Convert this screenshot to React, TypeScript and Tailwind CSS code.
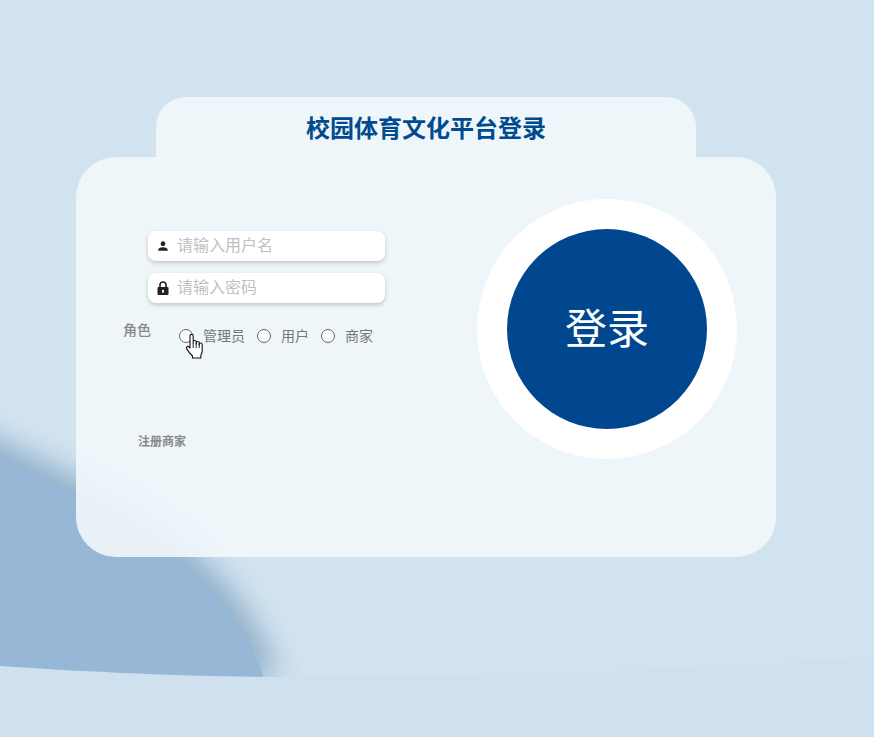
import React from "react";
import { MdPerson } from "react-icons/md";

const font = "[font-family:'Noto_Sans_CJK_SC','Liberation_Sans',sans-serif]";

function Background() {
  const blob = "M-40 438 C 40 478 120 512 170 552 C 215 590 250 630 268 690 L -40 690 Z";
  return (
    <svg className="absolute inset-0 w-full h-full" viewBox="0 0 874 737" aria-hidden="true">
      <defs>
        <filter id="soft" x="-30%" y="-30%" width="160%" height="160%">
          <feGaussianBlur stdDeviation="15" />
        </filter>
      </defs>
      <rect width="874" height="737" fill="#d2e3f0" />
      <path d={blob} fill="#86a8c4" filter="url(#soft)" opacity="0.9" transform="translate(10 -12)" />
      <path d={blob} fill="#96b8d6" />
      <path d="M0 666 C 120 674 210 677 300 677 C 500 677 700 668 874 657 L874 737 L0 737 Z" fill="#cfe0ef" />
    </svg>
  );
}

function Radio({ label }: { label: string }) {
  return (
    <label className="flex items-center">
      <input type="radio" name="role" className="appearance-none w-[14px] h-[14px] rounded-full border border-[#666] bg-white/70" />
      <span className="ml-[10px] -mt-[1px] text-[14px] leading-[20px] text-[#777]">{label}</span>
    </label>
  );
}

function LockIcon() {
  return (
    <svg className="ml-[9px] w-[12px] h-[15px] text-[#222]" viewBox="0 0 12 15" aria-hidden="true">
      <path d="M3 6.5V4a3 3 0 0 1 6 0v2.5" fill="none" stroke="currentColor" strokeWidth="1.6" />
      <path fillRule="evenodd" d="M1.5 6H10.5A1 1 0 0 1 11.5 7V13A1 1 0 0 1 10.5 14H1.5A1 1 0 0 1 .5 13V7A1 1 0 0 1 1.5 6ZM6 8.7a1.2 1.2 0 0 0-.6 2.2V12h1.2v-1.1A1.2 1.2 0 0 0 6 8.7Z" fill="currentColor" />
    </svg>
  );
}

function Hand() {
  return (
    <svg className="absolute left-[109px] top-[176px] w-[19px] h-[26px]" viewBox="0 0 19 26" aria-hidden="true">
      <path
        d="M5 15 V3 a1.6 1.6 0 0 1 3.2 0 V10 V9 a1.5 1.5 0 0 1 3 0 V11 V10 a1.5 1.5 0 0 1 3 0 V12 V11.5 a1.5 1.5 0 0 1 3 0 V18 c0 2 -.6 3 -1.4 4.5 V25 H7.5 V23 C5.5 21 3 18 1.6 15.6 a1.5 1.5 0 0 1 2.3 -1.8 Z"
        fill="#fff"
        stroke="#111"
        strokeWidth="1.1"
        strokeLinejoin="round"
      />
      <path d="M8.2 10v5M11.2 10v5M14.2 11v4" stroke="#111" strokeWidth="0.9" fill="none" />
    </svg>
  );
}

export default function App() {
  return (
    <div className={`relative w-[874px] h-[737px] overflow-hidden ${font}`}>
      <Background />
      <div className="relative pt-[97px] pl-[76px]">
        <div className="ml-[80px] w-[540px] h-[60px] rounded-t-[30px] bg-[#eff6fa] flex justify-center pt-[12px]">
          <h1 className="text-[24px] leading-[36px] font-bold text-[#004a90]">校园体育文化平台登录</h1>
        </div>
        <div className="relative w-[700px] h-[400px] rounded-[40px] bg-[#f2f7fb]/90 flex">
          <div className="w-[401px] flex flex-col pl-[47px] pt-[74px]">
            <div className="ml-[25px] w-[237px] h-[30px] rounded-[8px] bg-white shadow-[0_2px_4px_rgba(0,0,0,0.2)] flex items-center">
              <MdPerson className="ml-[8px] w-[14px] h-[14px] text-[#222]" />
              <input placeholder="请输入用户名" className="ml-[7px] -mt-[4px] w-[190px] text-[16px] outline-none bg-transparent placeholder:text-[#c0c0c4]" />
            </div>
            <div className="ml-[25px] mt-[12px] w-[237px] h-[30px] rounded-[8px] bg-white shadow-[0_2px_4px_rgba(0,0,0,0.2)] flex items-center">
              <LockIcon />
              <input placeholder="请输入密码" className="ml-[8px] -mt-[4px] w-[190px] text-[16px] outline-none bg-transparent placeholder:text-[#c0c0c4]" />
            </div>
            <div className="flex mt-[16px] items-start">
              <span className="text-[14px] leading-[20px] font-medium text-[#888]">角色</span>
              <div className="ml-[28px] mt-[7px] flex gap-[12px]">
                <Radio label="管理员" />
                <Radio label="用户" />
                <Radio label="商家" />
              </div>
            </div>
            <a className="ml-[15px] mt-[87px] text-[12px] leading-[18px] font-bold text-[#888]">注册商家</a>
          </div>
          <div className="mt-[42px] w-[260px] h-[260px] rounded-full bg-white flex items-center justify-center">
            <button className="w-[200px] h-[200px] rounded-full bg-[#004790] text-white text-[42px] leading-none pb-[6px]">登录</button>
          </div>
          <Hand />
        </div>
      </div>
    </div>
  );
}
